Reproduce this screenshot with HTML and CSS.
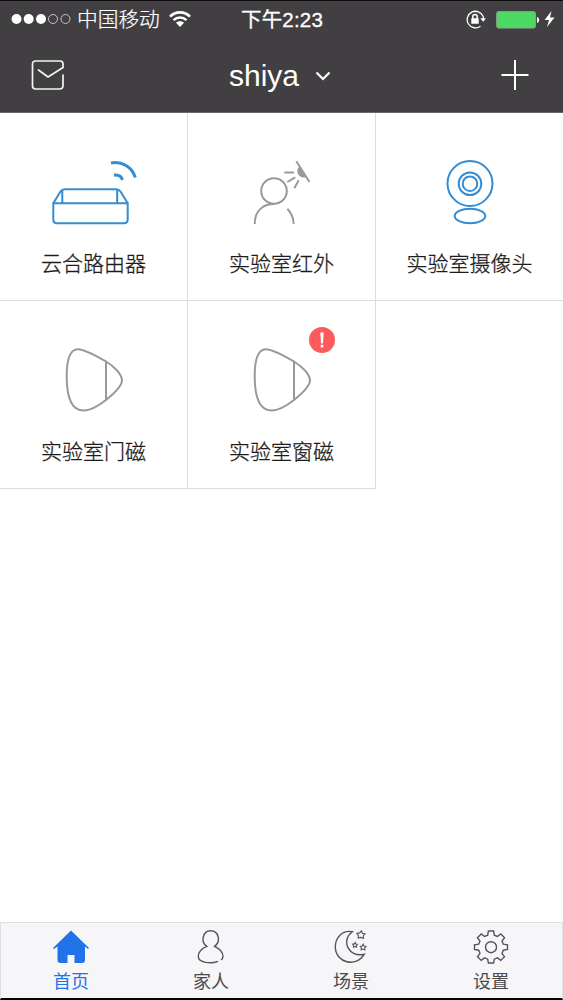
FILE: index.html
```html
<!DOCTYPE html>
<html lang="zh-CN">
    <head>
        <meta charset="utf-8">
        <title>shiya</title>
        <link rel="stylesheet" href="styles.css">
    </head>
    <body>
        <!-- status bar -->
        <div class="status">
            <div class="status_left">
                <svg class="signal" width="60" height="12" viewBox="0 0 60 12">
                    <g fill="#fff"><circle cx="5.5" cy="5" r="5"/><circle cx="17.7" cy="5" r="5"/><circle cx="30" cy="5" r="5"/></g>
                    <g fill="none" stroke="#c4c3c4"><circle cx="42" cy="5" r="4.5"/><circle cx="54.5" cy="5" r="4.5"/></g>
                </svg>
                <span class="carrier">中国移动</span>
                <svg width="22" height="18" viewBox="0 0 22 18" fill="none" stroke="#fff" stroke-width="2.6">
                    <path d="M1 5.600C6.500 0 15.500 0 21 5.600M4.600 9.200C8.200 5.600 13.800 5.600 17.400 9.200"/>
                    <path fill="#fff" stroke="none" d="M11 16L7 11.800C9 9.800 13 9.800 15 11.800Z"/>
                </svg>
            </div>
            <div class="clock">下午2:23</div>
            <div class="status_right">
                <svg width="20" height="20" viewBox="0 0 20 20" fill="none" stroke="#fff" stroke-width="1.3">
                    <path d="M17.200 6.500A8.300 8.300 0 1 0 14.500 16.200M17.300 6.500V9"/>
                    <path fill="#fff" stroke="none" d="M14.300 8.200H20L17.200 11.800ZM5.300 8.200H12.700V13.800H5.300Z"/>
                    <path d="M6.800 9V6.700C6.800 3.700 11.200 3.700 11.200 6.700V9" stroke-width="1.5"/>
                </svg>
                <svg class="battery" width="44" height="18" viewBox="0 0 44 18">
                    <rect x=".6" y=".6" width="39" height="16.500" rx="2" fill="#4cd964" stroke="#8f9d90"/>
                    <path d="M41 6C43.800 6.500 43.800 11.500 41 12Z" fill="#fff"/>
                </svg>
                <svg class="bolt" width="11" height="18" viewBox="0 0 11 18">
                    <path d="M7.500 0L.5 9H5L3 16L10.500 6.500H6Z" fill="#fff"/>
                </svg>
            </div>
        </div>

        <!-- title bar -->
        <div class="nav">
            <svg width="34" height="30" viewBox="0 0 34 30" fill="none" stroke="#f4f4f4" stroke-width="1.700" stroke-linecap="round" stroke-linejoin="round">
                <path d="M32 15V25.500Q32 29 28.500 29H4.500Q1.500 29 1.500 26V4Q1.500 1 4.500 1H29Q32 1 32 4V7.500L17 17L7.500 10"/>
            </svg>
            <div class="nav_title">shiya
                <svg width="16" height="10" viewBox="0 0 16 10" fill="none" stroke="#fff" stroke-width="2.200"><path d="M1.500 1.500L8 8L14.500 1.500"/></svg>
            </div>
            <svg width="28" height="30" viewBox="0 0 28 30" stroke="#fff" stroke-width="2"><path d="M.5 15H27.500M14 0V30"/></svg>
        </div>

        <!-- devices -->
        <div class="devices">
            <div class="tile">
                <svg class="tile_icon blue" viewBox="0 0 187 130">
                    <path d="M53.300 90.300V106.500Q53.300 110.300 57 110.300H124Q127.700 110.300 127.700 106.500V90.300ZM53.300 90.300L60.500 78.500Q62 76.300 65 76.300H116Q119 76.300 120.500 78.500L127.700 90.300M62.300 77V90M117.200 77V90"/>
                    <path stroke-width="3" d="M111 50C122 48 132 54 135.300 64.500M114 62.200C118.500 61.500 121.500 63.500 122.500 67"/>
                </svg>
                <div class="label">云合路由器</div>
            </div>
            <div class="tile">
                <svg class="tile_icon" viewBox="0 0 187 130">
                    <circle cx="86" cy="78" r="12.800"/>
                    <path d="M66.700 111C66.700 98 75 91 86 91M99.300 95.700Q105.500 102 105.700 111"/>
                    <path d="M108.300 48.300L121.500 69M96.300 59.500H106M99.300 69L107.300 64.300M106.300 75.300L110.700 67.300"/>
                    <path fill="#999" stroke="none" d="M111.500 53.500C107 57 109.500 65.500 117.500 64.500Z"/>
                </svg>
                <div class="label">实验室红外</div>
            </div>
            <div class="tile last">
                <svg class="tile_icon blue" viewBox="0 0 187 130">
                    <circle cx="94" cy="70.500" r="22.500"/>
                    <circle cx="94" cy="70.700" r="11.300"/>
                    <circle cx="94" cy="70.700" r="7.300"/>
                    <ellipse cx="94" cy="103" rx="15.300" ry="7.200"/>
                </svg>
                <div class="label">实验室摄像头</div>
            </div>
            <div class="tile">
                <svg class="tile_icon" viewBox="0 0 187 130">
                    <path d="M78 48.200C69 48.200 66.700 61 66.700 75C66.700 92 70 109.500 83.500 109.500C92 109.500 99 104.500 106 99C114 92.500 122 85 122 79.500C122 73 113.500 65 106 60.500C97 55.300 85 48.200 78 48.200ZM106 60.500V99"/>
                </svg>
                <div class="label">实验室门磁</div>
            </div>
            <div class="tile">
                <svg class="tile_icon" viewBox="0 0 187 130">
                    <path d="M78 48.200C69 48.200 66.700 61 66.700 75C66.700 92 70 109.500 83.500 109.500C92 109.500 99 104.500 106 99C114 92.500 122 85 122 79.500C122 73 113.500 65 106 60.500C97 55.300 85 48.200 78 48.200ZM106 60.500V99"/>
                </svg>
                <svg class="badge" viewBox="0 0 26 26">
                    <circle cx="13" cy="13" r="13" fill="#fc5a5d"/>
                    <path d="M11.300 5.500H14.700L14 16.500H12ZM11.700 17.800H14.300V20.600H11.700Z" fill="#fff"/>
                </svg>
                <div class="label">实验室窗磁</div>
            </div>
        </div>

        <!-- tabs -->
        <div class="tabs">
            <div class="tab active">
                <svg width="36" height="34" viewBox="0 0 36 34">
                    <path fill="#2272ea" d="M18 .5L36 18L35 19L32 16.500V30Q32 33 29 33H21.500V25H14.500V33H7.500Q4.500 33 4.500 30V16.500L1 19L0 18Z"/>
                </svg>
                <span>首页</span>
            </div>
            <div class="tab">
                <svg width="36" height="34" viewBox="0 0 36 34">
                    <path d="M25 31.300C18 34.200 5.300 32.800 5.300 26.500C5.300 22 8.500 18.500 13.800 16.300C7.500 12 9.500 .8 17.700 .8C26 .8 28 12 21.500 16.300C26.500 18.500 30 22.500 30 26.500Q30 28.500 28 29.800"/>
                </svg>
                <span>家人</span>
            </div>
            <div class="tab">
                <svg width="36" height="34" viewBox="0 0 36 34">
                    <path d="M19.300 1.800C9 -.5 2.300 8 2.300 16.800C2.300 33 23.500 38 31.300 24.200C15.500 28 7.500 10.500 19.300 1.800Z"/>
                    <path stroke-width="1.100" d="M28.500 .8L29.400 3.200L32 3.900L30.300 5.700L30.500 8.500L27.900 7.400L25.200 8.100L25.400 5.600L23.900 3.400L26.700 2.900ZM22.200 12.600L22.900 14L24.500 14.300L23.400 15.500L23.500 17.100L22 16.500L20.400 17.100L20.600 15.500L19.600 14.200L21.300 13.900ZM30.200 14.200L31 16L33 16.400L31.700 17.900L31.900 19.900L30 19.100L28.200 19.900L28.400 17.900L27.200 16.400L29.200 16Z"/>
                </svg>
                <span>场景</span>
            </div>
            <div class="tab">
                <svg width="36" height="34" viewBox="0 0 36 34">
                    <path d="M15.400 1H20.600L21.300 5.200L24.400 6.500L27.800 4L31.500 7.700L29 11.100L30.300 14.200L34.500 14.900V19.500L30.300 20.200L29 23.300L31.500 26.700L27.800 30.400L24.400 27.900L21.300 29.200L20.600 33H15.400L14.700 29.200L11.600 27.900L8.200 30.400L4.500 26.700L7 23.300L5.700 20.200L1.500 19.500V14.900L5.700 14.200L7 11.100L4.500 7.700L8.200 4L11.600 6.500L14.700 5.200Z"/>
                    <circle cx="18" cy="17.200" r="5.500"/>
                </svg>
                <span>设置</span>
            </div>
        </div>
    </body>
</html>
```

FILE: styles.css
```css
* {
	box-sizing: border-box;
}
body {
	margin: 0;
	height: 1000px;
	display: flex;
	flex-direction: column;
	background: #fff;
	font-family: "Liberation Sans", "Noto Sans CJK SC", sans-serif;
	overflow: hidden;
}
svg {
	display: block;
	flex: none;
}
.status {
	height: 38px;
	padding: 0 8px 0 11px;
	display: grid;
	grid-template-columns: 1fr auto 1fr;
	align-items: center;
	background: #413f42;
	border-top: 1px solid #0c090d;
	color: #fff;
	font-size: 20.5px;
	line-height: 36px;
}
.status_left, .status_right {
	display: flex;
	align-items: center;
}
.status_right {
	justify-content: flex-end;
}
.carrier {
	margin: 0 9px 0 6px;
	font-size: 20.7px;
	font-weight: 300;
	-webkit-text-stroke: 0.2px #fff;
}
.clock {
	padding-right: 2px;
	letter-spacing: 0.2px;
	-webkit-text-stroke: 0.3px #fff;
}
.battery {
	margin: 0 4px 0 10px;
}
.nav {
	height: 75px;
	padding: 0 34px 0 31px;
	display: flex;
	align-items: center;
	justify-content: space-between;
	background: #413f42;
	border-bottom: 1px solid #69676a;
	color: #fff;
}
.nav_title {
	display: flex;
	align-items: center;
	gap: 16px;
	padding: 2px 6px 0 0;
	font-size: 30px;
}
.devices {
	display: grid;
	grid-template-columns: 188px 188px 187px;
	grid-auto-rows: 188px;
}
.tile {
	position: relative;
	border-right: 1px solid #dcdcdc;
	border-bottom: 1px solid #dcdcdc;
}
.last {
	border-right: 0;
}
.tile_icon {
	width: 187px;
	height: 130px;
	fill: none;
	stroke: #999;
	stroke-width: 2;
}
.blue {
	stroke: #338dd2;
}
.badge {
	position: absolute;
	top: 26px;
	left: 121px;
	width: 26px;
	height: 26px;
}
.label {
	color: #1c1c1c;
	font-size: 21px;
	line-height: 42px;
	text-align: center;
	white-space: nowrap;
	font-weight: 300;
	-webkit-text-stroke: 0.3px #1c1c1c;
}
.tabs {
	height: 78px;
	margin-top: auto;
	padding-right: 1px;
	display: flex;
	background: #f6f5f8;
	border: 1px solid #dfdee1;
	border-bottom: 2px solid #000;
}
.tab {
	flex: 1;
	padding-top: 7px;
	display: flex;
	flex-direction: column;
	align-items: center;
	color: #4a4a4c;
	font-size: 18px;
	line-height: 36px;
}
.tab svg {
	fill: none;
	stroke: #555457;
	stroke-width: 1.4;
}
.active {
	color: #2272ea;
}
.tab.active svg {
	stroke: none;
}
```
